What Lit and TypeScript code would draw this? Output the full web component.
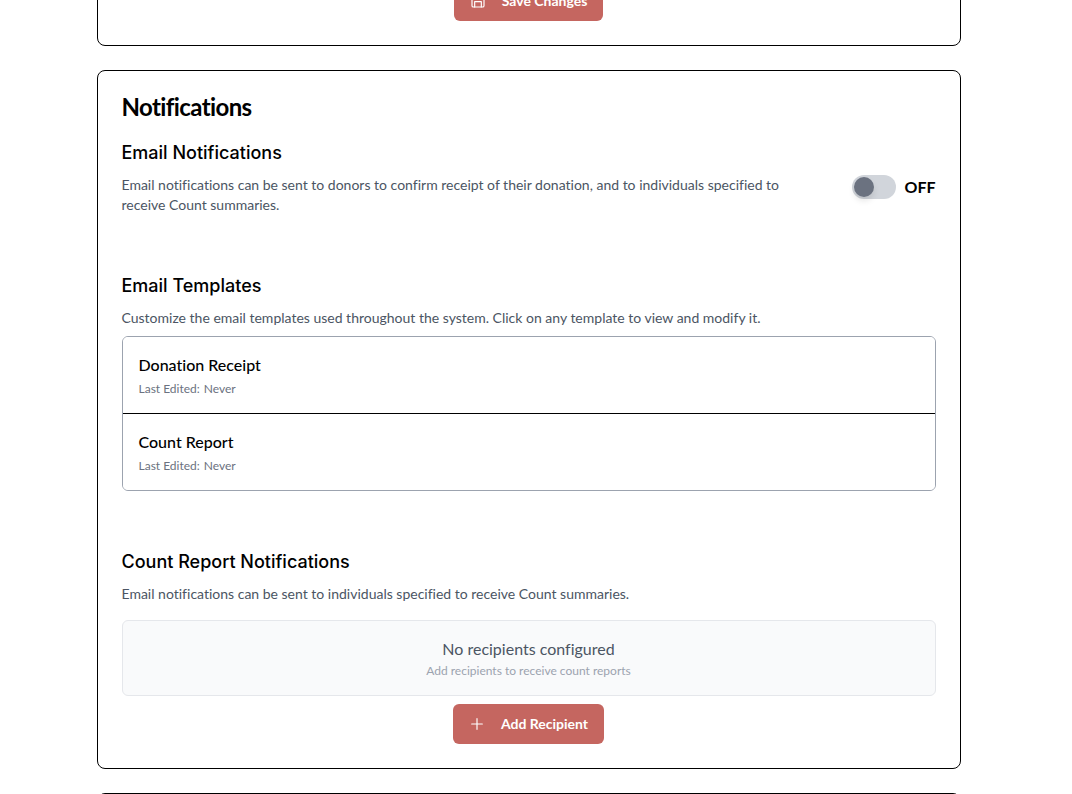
import { LitElement, html, css, svg } from "lit";
import { customElement, state } from "lit/decorators.js";

interface Template {
  name: string;
  edited: string;
}

@customElement("app-root")
export class AppRoot extends LitElement {
  @state() private emailOn = false;

  private templates: Template[] = [
    { name: "Donation Receipt", edited: "Never" },
    { name: "Count Report", edited: "Never" },
  ];

  static styles = css`
    :host {
      display: block;
      height: 100vh;
      overflow: hidden;
      background: #fff;
      color: #000;
      font-family: Lato, "Liberation Sans", sans-serif;
      font-size: 16px;
      line-height: 24px;
      font-variant-ligatures: no-common-ligatures;
    }
    * {
      box-sizing: border-box;
    }
    h2,
    h3,
    p {
      margin: 0;
    }
    button {
      font: inherit;
      font-variant-ligatures: inherit;
      cursor: pointer;
    }
    .page {
      display: flex;
      flex-direction: column;
      gap: 24px;
      max-width: 864px;
      margin: -44px auto 0;
    }
    .gutter {
      padding-right: 15px;
    }
    .card {
      border: 1px solid #000;
      border-radius: 8px;
      padding: 24px;
      background: #fff;
    }
    .title {
      font-size: 24px;
      line-height: 24px;
      font-weight: 700;
      letter-spacing: -0.025em;
      margin-bottom: 20px;
    }
    .section + .section {
      margin-top: 57px;
    }
    .heading {
      font-family: Inter, "Liberation Sans", sans-serif;
      font-size: 18px;
      line-height: 28px;
      font-weight: 500;
      margin-bottom: 8px;
    }
    .text {
      font-size: 14px;
      line-height: 20px;
      color: #4b5563;
    }
    .row {
      display: flex;
      align-items: flex-start;
      justify-content: space-between;
      gap: 64px;
    }
    .switch {
      display: flex;
      align-items: center;
      gap: 8px;
      flex: none;
      font-weight: 700;
    }
    .toggle {
      appearance: none;
      display: flex;
      align-items: center;
      width: 44px;
      height: 24px;
      margin: 0;
      padding: 2px;
      border-radius: 12px;
      background: #d1d5db;
      cursor: pointer;
    }
    .toggle::before {
      content: "";
      width: 20px;
      height: 20px;
      border-radius: 50%;
      background: #6b7280;
      box-shadow: 0 4px 6px rgba(0, 0, 0, 0.1);
    }
    .toggle:checked {
      justify-content: flex-end;
      background: #c56660;
    }
    .list {
      margin-top: 8px;
      border: 1px solid #9ca3af;
      border-radius: 6px;
      overflow: hidden;
    }
    .item {
      display: flex;
      flex-direction: column;
      gap: 4px;
      width: 100%;
      padding: 16px;
      border: 0;
      background: #fff;
      color: #000;
      text-align: left;
    }
    .item + .item {
      border-top: 1px solid #000;
    }
    .name {
      font-weight: 500;
    }
    .edited {
      display: flex;
      gap: 4px;
      font-size: 12px;
      line-height: 16px;
      color: #6b7280;
    }
    .empty {
      display: flex;
      flex-direction: column;
      gap: 2px;
      margin: 16px 0 8px;
      padding: 16px;
      border: 1px solid #e5e7eb;
      border-radius: 6px;
      background: #f9fafb;
      text-align: center;
      color: #4b5563;
    }
    .hint {
      font-size: 12px;
      line-height: 16px;
      color: #9ca3af;
    }
    .actions {
      display: flex;
      justify-content: center;
    }
    .primary {
      display: inline-flex;
      align-items: center;
      gap: 16px;
      height: 40px;
      padding: 0 16px;
      border: 0;
      border-radius: 6px;
      background: #c56660;
      color: #fff;
      font-size: 14px;
      line-height: 20px;
      font-weight: 700;
    }
    .icon {
      width: 16px;
      height: 16px;
      fill: none;
      stroke: currentColor;
      stroke-width: 1.75;
      stroke-linecap: round;
      stroke-linejoin: round;
    }
  `;

  private icon(body: unknown) {
    return html`<svg class="icon" viewBox="0 0 24 24" aria-hidden="true">${body}</svg>`;
  }

  private toggle(e: Event) {
    this.emailOn = (e.target as HTMLInputElement).checked;
  }

  render() {
    return html`
      <div class="gutter">
        <main class="page">
          <section class="card">
            <div class="actions">
              <button class="primary" type="button">
                ${this.icon(svg`<path d="M19 21H5a2 2 0 0 1-2-2V5a2 2 0 0 1 2-2h11l5 5v11a2 2 0 0 1-2 2z"/><path d="M17 21v-8H7v8"/><path d="M7 3v5h8"/>`)}
                Save Changes
              </button>
            </div>
          </section>

          <section class="card">
            <h2 class="title">Notifications</h2>

            <div class="section">
              <h3 class="heading">Email Notifications</h3>
              <div class="row">
                <p class="text" id="email-help">
                  Email notifications can be sent to donors to confirm receipt of their donation,
                  and to individuals specified to receive Count summaries.
                </p>
                <label class="switch">
                  <input
                    class="toggle"
                    type="checkbox"
                    role="switch"
                    aria-describedby="email-help"
                    .checked=${this.emailOn}
                    @change=${this.toggle}
                  />
                  <span>${this.emailOn ? "ON" : "OFF"}</span>
                </label>
              </div>
            </div>

            <div class="section">
              <h3 class="heading">Email Templates</h3>
              <p class="text">
                Customize the email templates used throughout the system. Click on any template to
                view and modify it.
              </p>
              <div class="list">
                ${this.templates.map(
                  (t) => html`
                    <button class="item" type="button">
                      <span class="name">${t.name}</span>
                      <span class="edited"><span>Last Edited:</span><span>${t.edited}</span></span>
                    </button>
                  `,
                )}
              </div>
            </div>

            <div class="section">
              <h3 class="heading">Count Report Notifications</h3>
              <p class="text">
                Email notifications can be sent to individuals specified to receive Count summaries.
              </p>
              <div class="empty">
                <p>No recipients configured</p>
                <p class="hint">Add recipients to receive count reports</p>
              </div>
              <div class="actions">
                <button class="primary" type="button">
                  ${this.icon(svg`<path d="M4 12h16"/><path d="M12 4v16"/>`)}
                  Add Recipient
                </button>
              </div>
            </div>
          </section>

          <section class="card"></section>
        </main>
      </div>
    `;
  }
}
